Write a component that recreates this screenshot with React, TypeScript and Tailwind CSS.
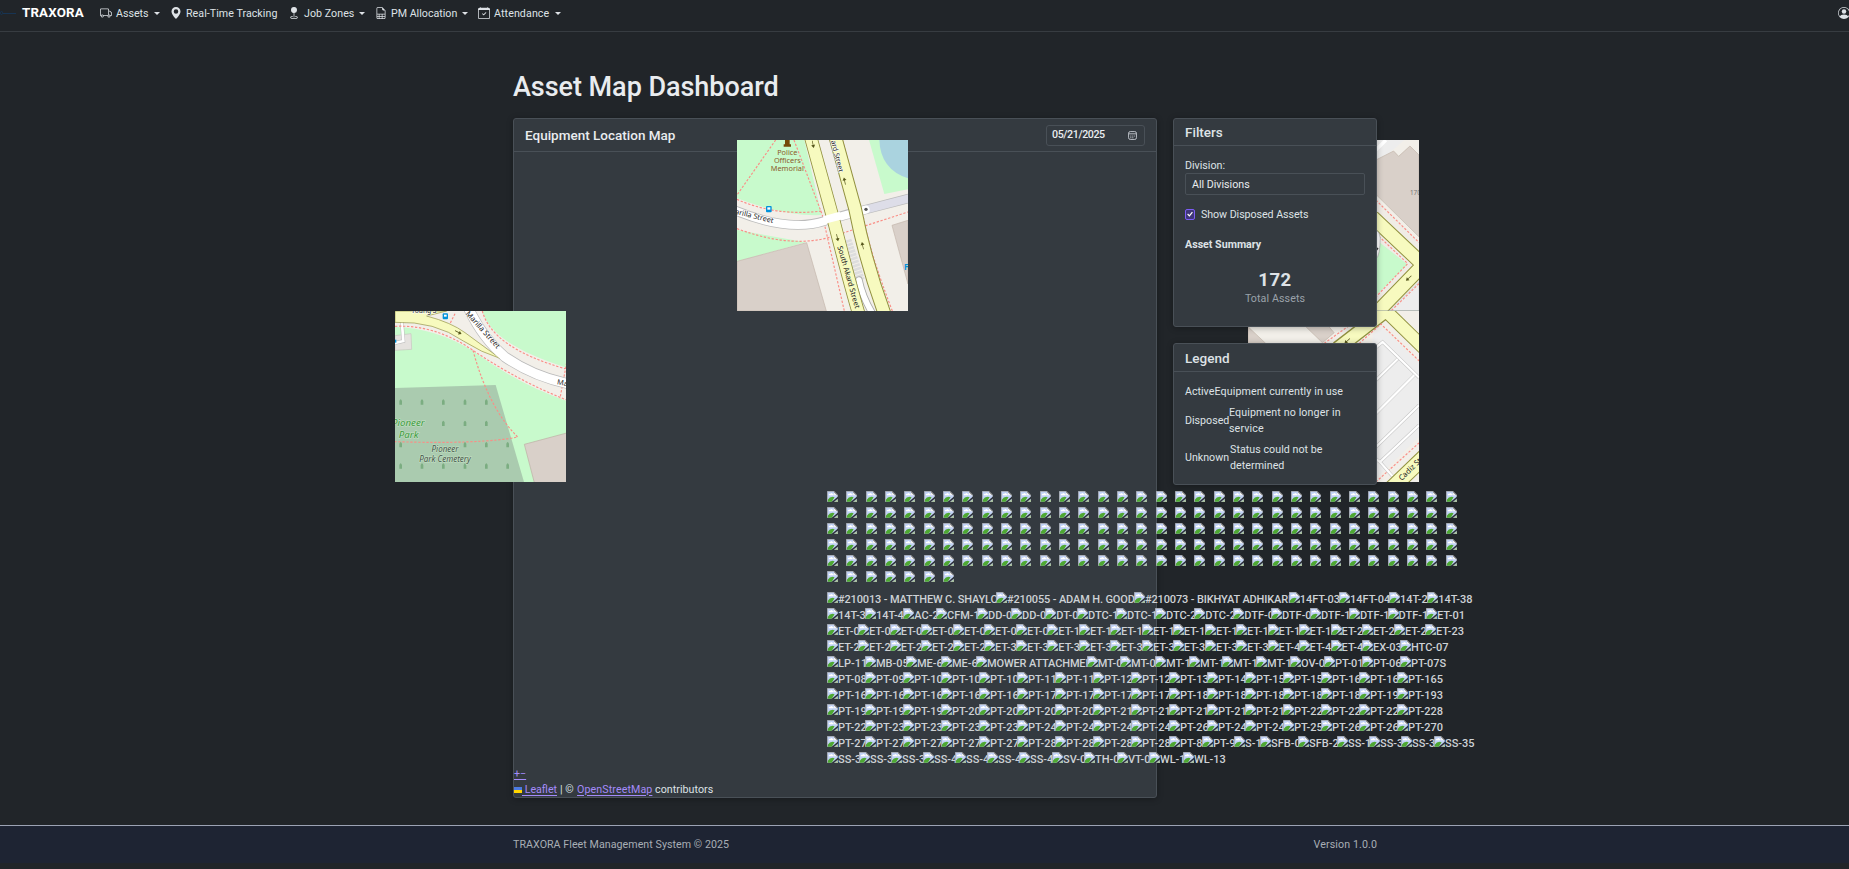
import type { ReactNode } from "react";
import {
  BsTruck,
  BsGeoAltFill,
  BsGeoFill,
  BsFileEarmarkSpreadsheet,
  BsCalendarCheck,
  BsPersonCircle,
} from "react-icons/bs";

function Caret() {
  return <span className="mt-px h-0 w-0 border-x-[3px] border-t-[3px] border-x-transparent border-t-[#dee2e6]" />;
}

function NavItem({ icon, label, width, text, caret }: { icon: ReactNode; label: string; width: string; text: string; caret?: boolean }) {
  return (
    <a className={`flex shrink-0 items-center ${width}`}>
      <span className="w-4 shrink-0">{icon}</span>
      <span className={`shrink-0 whitespace-nowrap pt-px ${text}`}>{label}</span>
      {caret && <Caret />}
    </a>
  );
}

function BrokenImage() {
  return (
    <svg viewBox="0 0 32 32" className="block h-[11px] w-[11px] shrink-0">
      <path d="M1 1h19l11 11v19H1z" fill="#c3d3f6" />
      <path d="M5 11q1-4 5-3q3-4 6 0q4 0 3 4H6z" fill="#fff" />
      <path d="M1 31V27Q10 14 22 18L14 31z" fill="#4ea832" />
      <path d="M20 1v11h11z" fill="#f5f5f5" />
      <path d="M20 1l11 11" stroke="#777" strokeWidth="3" />
      <path d="M32 16v6L20 32h-7z" fill="#2b3036" />
      <path d="M32 24v8H21z" fill="#a7bd9c" />
      <path d="M20 1.5H1.5V31M31 12v5" stroke="#a9adb5" strokeWidth="2.5" fill="none" />
    </svg>
  );
}

type Row = { names: string[]; at: number[] };

const even = (n: number) => Array.from({ length: n }, (_, i) => 36 + i * 114);

const rows: Row[] = [
  {
    names: ["#210013 - MATTHEW C. SHAYLOR", "#210055 - ADAM H. GOODE", "#210073 - BIKHYAT ADHIKARI", "14FT-03S", "14FT-04S", "14T-22", "14T-38"],
    at: [36, 543, 957, 1421, 1572, 1722, 1837],
  },
  {
    names: ["14T-39", "14T-47", "AC-23", "CFM-15", "DD-02", "DD-03", "DT-08", "DTC-11", "DTC-12", "DTC-26", "DTC-27", "DTF-08", "DTF-09", "DTF-12", "DTF-13", "DTF-17", "ET-01"],
    at: [36, 150, 265, 363, 486, 588, 691, 786, 903, 1020, 1138, 1255, 1368, 1485, 1602, 1718, 1833],
  },
  {
    names: ["ET-02", "ET-03", "ET-04", "ET-05", "ET-07", "ET-08", "ET-09", "ET-10", "ET-11", "ET-12", "ET-13", "ET-14", "ET-15", "ET-17", "ET-18", "ET-19", "ET-20", "ET-21", "ET-22", "ET-23"],
    at: [36, 129, 224, 318, 414, 507, 603, 697, 792, 885, 981, 1073, 1170, 1263, 1358, 1451, 1547, 1641, 1737, 1830],
  },
  {
    names: ["ET-24", "ET-25", "ET-27", "ET-28", "ET-29", "ET-30", "ET-31", "ET-32", "ET-33", "ET-34", "ET-35", "ET-36", "ET-38", "ET-39", "ET-41", "ET-42", "ET-43", "EX-03S", "HTC-07"],
    at: [36, 129, 224, 318, 414, 507, 603, 697, 792, 885, 981, 1073, 1170, 1263, 1358, 1451, 1547, 1641, 1755],
  },
  {
    names: ["LP-11S", "MB-05S", "ME-61", "ME-62", "MOWER ATTACHMENT", "MT-07", "MT-08", "MT-12", "MT-13", "MT-15", "MT-16", "OV-02", "PT-01S", "PT-06S", "PT-07S"],
    at: [36, 150, 273, 378, 483, 815, 915, 1020, 1122, 1221, 1323, 1425, 1527, 1641, 1755],
  },
  {
    names: ["PT-08S", "PT-09S", "PT-101", "PT-103", "PT-109", "PT-110", "PT-115", "PT-120", "PT-125", "PT-137", "PT-147", "PT-152", "PT-157", "PT-160", "PT-162", "PT-165"],
    at: even(16),
  },
  {
    names: ["PT-166", "PT-167", "PT-168", "PT-169", "PT-16S", "PT-173", "PT-174", "PT-177", "PT-178", "PT-180", "PT-182", "PT-185", "PT-187", "PT-188", "PT-192", "PT-193"],
    at: even(16),
  },
  {
    names: ["PT-194", "PT-195", "PT-198", "PT-201", "PT-202", "PT-207", "PT-208", "PT-210", "PT-212", "PT-213", "PT-217", "PT-218", "PT-222", "PT-223", "PT-227", "PT-228"],
    at: even(16),
  },
  {
    names: ["PT-229", "PT-230", "PT-232", "PT-235", "PT-239", "PT-240", "PT-241", "PT-242", "PT-243", "PT-26S", "PT-248", "PT-249", "PT-252", "PT-262", "PT-267", "PT-270"],
    at: even(16),
  },
  {
    names: ["PT-271", "PT-273", "PT-274", "PT-276", "PT-279", "PT-280", "PT-281", "PT-282", "PT-284", "PT-87", "PT-95", "S-14", "SFB-04", "SFB-23", "SS-12", "SS-33", "SS-34", "SS-35"],
    at: [...even(10), 1161, 1257, 1335, 1449, 1566, 1662, 1758, 1857],
  },
  {
    names: ["SS-36", "SS-37", "SS-39", "SS-41", "SS-44", "SS-45", "SS-48", "SV-03", "TH-04", "VT-01", "WL-12", "WL-13"],
    at: [36, 132, 228, 324, 420, 516, 612, 711, 807, 906, 1002, 1104],
  },
];

function LabelRow({ row }: { row: Row }) {
  return (
    <div className="flex h-4 flex-nowrap">
      {row.names.map((name, i) => (
        <span
          key={name}
          className="relative flex shrink-0 whitespace-nowrap"
          style={{ width: i + 1 < row.at.length ? (row.at[i + 1] - row.at[i]) / 3 : undefined }}
        >
          <BrokenImage />
          <span className={name.length > 12 ? "leading-4 tracking-[-0.14px]" : "leading-4"}>{name}</span>
        </span>
      ))}
    </div>
  );
}

const street = { fill: "#222", fontFamily: "Noto Sans, sans-serif", stroke: "#fff", strokeWidth: 3, paintOrder: "stroke" as const };
const path = { fill: "none", stroke: "#fa8e86", strokeWidth: 3.5, strokeDasharray: "7 5" };

function Arrow({ x, y, r }: { x: number; y: number; r: number }) {
  return <path transform={`translate(${x} ${y}) rotate(${r})`} d="M-11-1H2V-6L11 0L2 6V1H-11z" fill="#55551a" />;
}

function AkardTile() {
  return (
    <svg viewBox="34 30 513 513" className="h-[171px] w-[171px]">
      <rect x="34" y="30" width="513" height="513" fill="#f2efe9" />
      <path d="M34 30H236L288 255Q180 260 34 205zM34 300L240 337L34 394z" fill="#c8facc" />
      <path d="M430 30H547V178L476 192z" fill="#c8facc" />
      <path d="M461 30H547V145Q464 118 461 30z" fill="#aad3df" />
      <path d="M34 394L243 338L302 543H34zM499 286L547 271V462z" fill="#d9d0c9" stroke="#c2b5aa" strokeWidth="2" />
      <path d="M150 30L34 195M34 208Q150 260 290 243M205 30L290 255L356 543M34 296Q210 362 340 313L547 246M350 30L415 270Q430 360 500 543" {...path} />
      <path d="M20 238Q190 310 300 272L400 243" stroke="#bbb" strokeWidth="29" fill="none" />
      <path d="M400 244L550 205" stroke="#bbb" strokeWidth="28" />
      <path d="M400 244L550 205" stroke="#dddde8" strokeWidth="24" />
      <path d="M20 238Q190 310 300 272L420 239" stroke="#fff" strokeWidth="24" fill="none" strokeLinecap="round" />
      <path d="M365 330L405 450" stroke="#ddd" strokeWidth="25" strokeDasharray="8 3" />
      <path d="M400 450Q410 500 440 550" stroke="#aaa" strokeWidth="22" fill="none" strokeLinecap="round" />
      <path d="M400 450Q410 500 440 550" stroke="#fff" strokeWidth="17" fill="none" strokeLinecap="round" />
      <path d="M252 10L325 275Q380 490 402 560" stroke="#91913f" strokeWidth="40" fill="none" />
      <path d="M326 10L388 235Q420 400 480 560" stroke="#91913f" strokeWidth="41" fill="none" />
      <path d="M252 10L325 275Q380 490 402 560M326 10L388 235Q420 400 480 560" stroke="#f7fabf" strokeWidth="35" fill="none" />
      <path d="M295 270L345 257" stroke="#fff" strokeWidth="24" />
      <Arrow x={262} y={43} r={78} />
      <Arrow x={335} y={323} r={78} />
      <Arrow x={357} y={153} r={-102} />
      <Arrow x={411} y={347} r={-102} />
      <circle cx="421" cy="238" r="5" fill="#555" />
      <path d="M174 50V43H178V30H192V43H196V50z" fill="#734a08" />
      <rect x="121" y="228" width="17" height="19" rx="3" fill="#0092da" />
      <rect x="125" y="232" width="9" height="7" fill="#fff" />
      <g fill="#8b5a2b" fontFamily="Noto Sans, sans-serif" fontSize="22" textAnchor="middle">
        <text x="185" y="75">Police</text>
        <text x="185" y="99">Officers</text>
        <text x="185" y="123">Memorial</text>
      </g>
      <text x="27" y="251" transform="rotate(14 27 251)" fontSize="22" {...street}>arilla Street</text>
      <text transform="translate(316 33) rotate(76)" fontSize="21" {...street}>ard Street</text>
      <text transform="translate(335 350) rotate(74)" fontSize="22" {...street} strokeWidth={0}>South Akard Street</text>
      <text x="535" y="420" fontSize="24" fontWeight="700" fill="#0092da" fontFamily="Noto Sans, sans-serif">F</text>
    </svg>
  );
}

function CemeteryTile() {
  const tombs = [
    [47, 303], [111, 303], [175, 303], [240, 303], [304, 303],
    [175, 367], [240, 367], [304, 367],
    [47, 431], [240, 431], [304, 431], [368, 431],
    [47, 495], [111, 495], [175, 495], [240, 495], [304, 495], [368, 495],
  ];
  return (
    <svg viewBox="30 30 513 513" className="h-[171px] w-[171px]">
      <rect x="30" y="30" width="513" height="513" fill="#c8facc" />
      <path d="M30 30H292Q320 130 545 200V300Q400 250 264 150Q150 80 30 78z" fill="#f2efe9" />
      <path d="M30 261L332 252L417 543H30z" fill="#aacbaf" />
      <path d="M418 430L545 396V545H448z" fill="#d9d0c9" stroke="#bcaea3" strokeWidth="2" />
      <path d="M30 104L78 98L80 145L30 148z" fill="#e5e2df" stroke="#c9c4c0" strokeWidth="2" />
      <path d="M50 55L55 120L30 126" stroke="#bbb" strokeWidth="11" fill="none" />
      <path d="M50 55L55 120L30 126" stroke="#fff" strokeWidth="8" fill="none" />
      <path d="M30 76Q150 70 264 148Q400 240 545 297M292 30Q320 140 540 203M264 148Q310 320 398 408Q290 430 30 422M210 38L195 68M545 185L525 292" {...path} />
      <path d="M245 10Q290 110 360 168Q450 230 560 250" stroke="#bbb" strokeWidth="32" fill="none" />
      <path d="M30 30H185L125 45Q200 65 240 95L345 172Q290 155 235 120Q150 60 30 64z" fill="#f7fabf" stroke="#91913f" strokeWidth="2" />
      <path d="M245 10Q290 110 360 168Q450 230 560 250" stroke="#fff" strokeWidth="28" fill="none" />
      <Arrow x={220} y={94} r={28} />
      {tombs.map(([x, y]) => (
        <path key={`${x}-${y}`} d={`M${x - 7} ${y + 8}h3v-11q4-10 8 0v11h3z`} fill="#7bad81" />
      ))}
      <rect x="173" y="37" width="16" height="18" rx="3" fill="#0092da" />
      <rect x="177" y="41" width="8" height="6" fill="#fff" />
      <rect x="30" y="116" width="4" height="9" fill="#0092da" />
      <text x="79" y="37" fontSize="20" {...street}>Young S</text>
      <text transform="translate(241 39) rotate(48)" fontSize="22.5" {...street}>Marilla Street</text>
      <text transform="translate(515 250) rotate(10)" fontSize="22" {...street}>Marilla</text>
      <g fontStyle="italic" fontFamily="Noto Sans, sans-serif" textAnchor="middle" stroke="#c8e3c8" strokeWidth="3" style={{ paintOrder: "stroke" }}>
        <text x="70" y="375" fontSize="29" fill="#3c9a3c">Pioneer</text>
        <text x="71" y="411" fontSize="29" fill="#3c9a3c">Park</text>
        <text x="180" y="454" fontSize="24" fill="#445348">Pioneer</text>
        <text x="180" y="482" fontSize="24" fill="#445348">Park Cemetery</text>
      </g>
    </svg>
  );
}

function NortheastTile() {
  return (
    <svg viewBox="267 105 512 512" className="h-[171px] w-[171px]">
      <rect x="267" y="105" width="512" height="512" fill="#f2efe9" />
      <path d="M650 105H735L650 180z" fill="#ededed" />
      <path d="M650 135L680 105" stroke="#fff" strokeWidth="10" />
      <path d="M640 170L703 138L718 154L752 123L779 150V395L640 258z" fill="#d9d0c9" stroke="#c2b5aa" strokeWidth="2" />
      <path d="M640 270L790 420V540L640 640z" fill="#f0ece6" />
      <path d="M640 395L745 478L640 580z" fill="#c8facc" />
      <path d="M690 617L779 530V617z" fill="#ededed" stroke="#ccc" strokeWidth="2" />
      <path d="M640 336L800 487M800 470L640 635" stroke="#91913f" strokeWidth="44" />
      <path d="M640 336L800 487M800 470L640 635" stroke="#f7fabf" strokeWidth="38" />
      <path d="M650 285L779 412M650 385L745 475L650 575M779 535L695 617" {...path} />
      <path d="M640 375Q668 370 662 420Q660 465 640 465" fill="#fff" stroke="#aaa" strokeWidth="2" />
      <Arrow x={748} y={519} r={138} />
      <path d="M647 440L656 428" stroke="#333" strokeWidth="5" />
      <text x="752" y="270" fontSize="19" fill="#777" fontFamily="Noto Sans, sans-serif">1700</text>
      <path d="M267 616H779" stroke="#98a09a" strokeWidth="2" />
    </svg>
  );
}

function CadizTile() {
  return (
    <svg viewBox="267 -27 512 512" className="h-[171px] w-[171px]">
      <rect x="267" y="-27" width="512" height="512" fill="#f2efe9" />
      <path d="M267 20L320 70H267zM435 15L490 68L525 38L505 15z" fill="#d9d0c9" stroke="#c2b5aa" strokeWidth="2" />
      <path d="M640 40L670 22L779 130V350L640 485z" fill="#ededed" />
      <path d="M535 85L680 -27" stroke="#91913f" strokeWidth="44" />
      <path d="M680 -27L800 90" stroke="#91913f" strokeWidth="42" />
      <path d="M535 85L680 -27L800 90" stroke="#f7fabf" strokeWidth="36" fill="none" />
      <path d="M495 70L650 -40M600 70L665 12L779 122M650 485L779 368" {...path} />
      <path d="M640 90L670 66L779 172M715 117L640 190M765 165L640 290M779 255L640 390M779 315L662 425L640 408M662 425L700 468" stroke="#c8c8c8" strokeWidth="10" fill="none" />
      <path d="M640 90L670 66L779 172M715 117L640 190M765 165L640 290M779 255L640 390M779 315L662 425L640 408M662 425L700 468" stroke="#fff" strokeWidth="6.5" fill="none" />
      <path d="M680 520L810 395" stroke="#91913f" strokeWidth="48" />
      <path d="M680 520L810 395" stroke="#f7fabf" strokeWidth="42" />
      <Arrow x={564} y={63} r={138} />
      <text transform="translate(727 482) rotate(-44)" fontSize="23" {...street} strokeWidth={0}>Cadiz Street</text>
    </svg>
  );
}

const card = "rounded-[3px] border border-[#495057] bg-[#343a40] shadow-[0_1px_6px_rgba(0,0,0,0.3)]";

export default function App() {
  return (
    <div className="relative flex h-[869px] w-[1849px] flex-col overflow-hidden bg-[#212529] font-['Roboto',sans-serif] text-[10.67px] leading-4 text-[#dee2e6]">
      <nav className="flex h-8 shrink-0 items-center border-b border-[#373c41] pb-[5px]">
        <span className="flex w-[22px] shrink-0 items-center text-[#173453]">
          <span className="h-1 w-[3px] rounded-full border border-[#173453]" />
          <span className="h-px w-[13px] bg-[#173453]" />
        </span>
        <span className="w-[78px] shrink-0 text-[13.33px] font-bold tracking-[0.15px] text-white">TRAXORA</span>
        <NavItem icon={<BsTruck size={12} />} label="Assets" width="w-[70px]" text="w-[38px]" caret />
        <NavItem icon={<BsGeoAltFill size={12} />} label="Real-Time Tracking" width="w-[118px]" text="w-[98px] tracking-[0.05px]" />
        <NavItem icon={<BsGeoFill size={12} />} label="Job Zones" width="w-[87px]" text="w-[55px] tracking-[0.05px]" caret />
        <NavItem icon={<BsFileEarmarkSpreadsheet size={12} />} label="PM Allocation" width="w-[103px]" text="w-[71px]" caret />
        <NavItem icon={<BsCalendarCheck size={12} />} label="Attendance" width="w-[100px]" text="w-[61px] tracking-[0.1px]" caret />
        <span className="ml-auto w-[11px] shrink-0 overflow-visible">
          <BsPersonCircle size={12} />
        </span>
      </nav>

      <main className="ml-[513px] w-[864px] shrink-0 pt-9">
        <h1 className="h-[50px] whitespace-nowrap pt-px text-[27px] font-medium leading-[37px] tracking-[-0.05px] text-[#e9ecef]">Asset Map Dashboard</h1>
        <div className="flex items-start gap-4">
          <section className={`relative flex h-[680px] w-[644px] shrink-0 flex-col ${card}`}>
            <header className="flex h-[33px] shrink-0 items-center justify-between border-b border-[#495057] pl-[11px] pr-[11px]">
              <h2 className="text-[13.5px] font-medium text-[#e9ecef]">Equipment Location Map</h2>
              <div className="flex h-[21px] w-[99px] items-center justify-between rounded-[3px] border border-[#495057] pl-[5px] pr-[7px] font-medium text-[#e9ecef]">
                <span className="tracking-[-0.4px]">05/21/2025</span>
                <svg viewBox="0 0 16 16" className="h-[9px] w-[9px]" fill="none" stroke="#c5cad0" strokeWidth="1.6">
                  <rect x="1" y="1" width="14" height="14" rx="3" />
                  <path d="M1 5h14M4 9h2M7.500 9h2M11 9h1.500M4 12h2M7.500 12h2" />
                </svg>
              </div>
            </header>
            <div className="mt-auto">
              <div className="h-4">
                <a className="text-[#a48bfa] underline underline-offset-2">+−</a>
              </div>
              <div className="flex h-[15px] items-center whitespace-nowrap leading-4">
                <span className="flex h-[6px] w-2 flex-col">
                  <span className="h-[3px] bg-[#4c7be1]" />
                  <span className="h-[3px] bg-[#ffd500]" />
                </span>
                <a className="mr-[3px] whitespace-pre text-[#a48bfa] underline underline-offset-2"> Leaflet</a>
                <span className="w-[17px] whitespace-pre">| ©</span>
                <a className="w-[78px] tracking-[0.1px] text-[#a48bfa] underline underline-offset-2">OpenStreetMap</a>
                <span className="tracking-[0.05px]">contributors</span>
              </div>
            </div>
          </section>

          <aside className="relative z-20 flex w-[204px] shrink-0 flex-col gap-4">
            <section className={`h-[209px] ${card}`}>
              <h2 className="h-[27px] border-b border-[#495057] pl-[11px] pt-[5px] text-[13.5px] font-medium leading-4">Filters</h2>
              <div className="px-[11px] pt-3">
                <label className="block h-[15px]">Division:</label>
                <div className="h-[22px] w-[180px] rounded-[2px] border border-[#495057] pl-[6px] pt-[3px] text-[#e9ecef]">All Divisions</div>
                <label className="mt-[11px] flex h-4 items-center">
                  <span className="mr-[6px] flex h-[11px] w-[10px] items-center justify-center rounded-[2px] border border-[#7c5cf5] bg-[#3f3678]">
                    <svg viewBox="0 0 10 10" className="h-[6px] w-[6px]" fill="none" stroke="#fff" strokeWidth="2">
                      <path d="M1 5l3 3l5-6" />
                    </svg>
                  </span>
                  <span className="pt-px tracking-[-0.05px]">Show Disposed Assets</span>
                </label>
                <h3 className="mt-[15px] h-4 font-bold">Asset Summary</h3>
                <div className="mt-[15px] text-center">
                  <div className="pt-px text-[18.500px] font-bold leading-[22px] tracking-[0.5px]">172</div>
                  <div className="tracking-[0.1px] text-[#9ba2aa]">Total Assets</div>
                </div>
              </div>
            </section>
            <section className={`h-[142px] ${card}`}>
              <h2 className="h-[28px] border-b border-[#495057] pl-[11px] pt-[6px] text-[13.5px] font-medium leading-4">Legend</h2>
              <div className="flex flex-col gap-[5px] whitespace-nowrap pl-[11px] pt-3">
                <div className="flex">
                  <span className="w-[29.500px]">Active</span>
                  <span className="tracking-[0.12px]">Equipment currently in use</span>
                </div>
                <div className="flex items-center">
                  <span className="w-[44px]">Disposed</span>
                  <span className="tracking-[0.12px]">Equipment no longer in<br />service</span>
                </div>
                <div className="flex items-center">
                  <span className="w-[45px]">Unknown</span>
                  <span className="tracking-[0.05px]">Status could not be<br />determined</span>
                </div>
              </div>
            </section>
          </aside>
        </div>
      </main>

      <div className="absolute left-[737px] top-[140px]"><AkardTile /></div>
      <div className="absolute left-[395px] top-[311px]"><CemeteryTile /></div>
      <div className="absolute left-[1248px] top-[140px]"><NortheastTile /></div>
      <div className="absolute left-[1248px] top-[311px]"><CadizTile /></div>

      <div className="absolute left-[827px] top-[491px] z-30">
        <div className="grid grid-cols-[repeat(33,19.333px)] auto-rows-[16px]">
          {Array.from({ length: 172 }, (_, i) => (
            <BrokenImage key={i} />
          ))}
        </div>
        <div className="mt-[5px] text-[11px] font-medium text-[#ced2d6]">
          {rows.map((row) => (
            <LabelRow key={row.names[0]} row={row} />
          ))}
        </div>
      </div>

      <footer className="mt-[27px] h-[38px] shrink-0 border-t border-[#9ca3b4] bg-[#1e2433] text-[#a8aeb5]">
        <div className="ml-[513px] flex h-[37px] w-[864px] items-center justify-between">
          <span className="tracking-[0.05px]">TRAXORA Fleet Management System © 2025</span>
          <span className="tracking-[0.1px]">Version 1.0.0</span>
        </div>
      </footer>
    </div>
  );
}
